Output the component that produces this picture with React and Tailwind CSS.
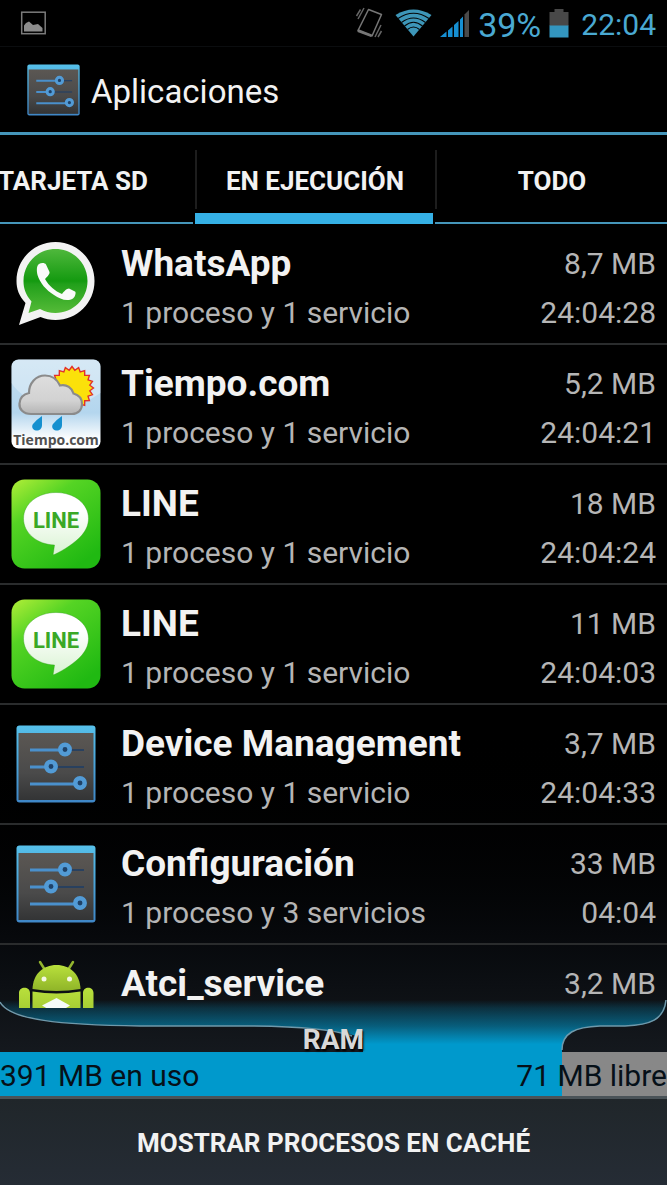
import React from "react";

function SettingsIcon({ className }) {
  return (
    <svg viewBox="0 0 80 78" className={className} aria-hidden="true">
      <defs>
        <linearGradient id="panel" x1="0" y1="0" x2="0" y2="1">
          <stop offset="0" stopColor="#5b5753" />
          <stop offset="0.6" stopColor="#4a4a4a" />
          <stop offset="1" stopColor="#333435" />
        </linearGradient>
        <linearGradient id="edge" x1="0" y1="0" x2="0" y2="1">
          <stop offset="0" stopColor="#56c0ea" />
          <stop offset="1" stopColor="#3f86c6" />
        </linearGradient>
      </defs>
      <rect x="0.5" y="0.5" width="79" height="77" rx="3" fill="url(#edge)" />
      <rect x="2.5" y="8" width="75" height="67" fill="url(#panel)" />
      <path d="M52 25H68M38 42H68" stroke="#1d3d66" strokeWidth="1.6" />
      <path d="M14 25H46M14 42H32M14 59H62" stroke="#4a90cc" strokeWidth="3" />
      <g fill="#1f4268" stroke="#529bd6" strokeWidth="4.5">
        <circle cx="49" cy="24.5" r="4.7" />
        <circle cx="35" cy="41.5" r="4.7" />
        <circle cx="64" cy="58" r="4.7" />
      </g>
    </svg>
  );
}

function WhatsAppIcon() {
  return (
    <svg viewBox="0 0 90 90" className="size-[90px]" aria-hidden="true">
      <defs>
        <linearGradient id="wa" x1="0" y1="0" x2="0" y2="1">
          <stop offset="0" stopColor="#4fb83c" />
          <stop offset="0.5" stopColor="#149a10" />
          <stop offset="0.55" stopColor="#22a01b" />
          <stop offset="1" stopColor="#55bb38" />
        </linearGradient>
      </defs>
      <path d="M44.500 3C66 3 83.500 20 83.500 42S66 81 44.500 81C39 81 34 80 29.500 78L8 86L14.500 64C8 57 5.500 50 5.500 42C5.500 20 23 3 44.500 3Z" fill="#f3f3f3" />
      <path d="M44.500 10C62 10 76.500 24 76.500 42S62 74 44.500 74C38.500 74 34 72.500 29 70L17.500 74L20.500 62.500C15 56 12.500 50 12.500 42C12.500 24 27 10 44.500 10Z" fill="url(#wa)" />
      <path d="M28 25C30 23.500 34 23.500 35 25.500L38.500 33C39 35 36 38 34 40C38 47 44 52 51 55C53 52.500 55.500 49.500 58 49.500L64 52.500C65.500 53.500 64 58 62 59.500C56 63 49 60 43 56C35 51 29 44 26.500 36C25.500 31 25.500 27 28 25Z" fill="#fafafa" />
    </svg>
  );
}

function TiempoIcon() {
  const spikes = Array.from({ length: 40 }, (_, i) => {
    const a = (i * Math.PI) / 20;
    const r = i % 2 ? 18 : 21.5;
    return `${61 + r * Math.cos(a)},${29 + r * Math.sin(a)}`;
  }).join(" ");
  return (
    <svg viewBox="0 0 90 90" className="size-[90px]" aria-hidden="true">
      <defs>
        <linearGradient id="sky" x1="0" y1="0" x2="0" y2="1">
          <stop offset="0" stopColor="#c4dff1" />
          <stop offset="0.6" stopColor="#b4d6ee" />
          <stop offset="0.9" stopColor="#ffffff" />
        </linearGradient>
        <linearGradient id="cloud" x1="0" y1="0" x2="0" y2="1">
          <stop offset="0" stopColor="#dedede" />
          <stop offset="0.65" stopColor="#d2d2d2" />
          <stop offset="1" stopColor="#b4b4b4" />
        </linearGradient>
      </defs>
      <rect x="0.5" y="0.5" width="89" height="89" rx="7" fill="url(#sky)" />
      <path d="M0.5 24Q12 42 40 46T89.500 34V8Q89 1 82 0.500H8Q1 1 0.500 8Z" fill="#fff" opacity="0.3" />
      <polygon points={spikes} fill="#fbe10a" stroke="#e2302a" strokeWidth="1.4" />
      <path d="M20 55C12 55 8 50 8.500 44.500C9 38 13 35 18 34C18 24 25 16.500 34 16.500C42 16.500 46 20 49 26.500C56 25 61 29 62.500 34.500C68 36 71 40 71 45C71 51 67 55 61 55Z" fill="url(#cloud)" stroke="#8b8b8b" strokeWidth="2.2" />
      <path d="M31 57V66C31 70 28 72 25 71.500S20 68 22 65Q25 61 31 57ZM51 57V66C51 70 48 72 45 71.500S40 68 42 65Q45 61 51 57Z" fill="#1690cf" />
      <text x="45" y="86" textAnchor="middle" fontFamily="Open Sans, sans-serif" fontWeight="700" fontSize="14" fill="#505050">Tiempo.com</text>
    </svg>
  );
}

function LineIcon() {
  return (
    <svg viewBox="0 0 90 90" className="size-[90px]" aria-hidden="true">
      <defs>
        <linearGradient id="line" x1="0" y1="0" x2="0.7" y2="1">
          <stop offset="0" stopColor="#b2ee38" />
          <stop offset="0.35" stopColor="#55d424" />
          <stop offset="1" stopColor="#20b912" />
        </linearGradient>
        <linearGradient id="bubble" x1="0" y1="0" x2="0" y2="1">
          <stop offset="0.3" stopColor="#ffffff" />
          <stop offset="1" stopColor="#d9f3d2" />
        </linearGradient>
      </defs>
      <rect x="0.5" y="0.5" width="89" height="89" rx="13" fill="url(#line)" />
      <path d="M45 13.500C63 13.500 77.500 24.500 77.500 39.500C77.500 46 75 51 71 56C64 64 53 71 43.500 75.500C42 76 42 75 42.500 73L43.500 66C26 65.500 12.500 54 12.500 39.500C12.500 24.500 27 13.500 45 13.500Z" fill="url(#bubble)" stroke="#2e9e15" strokeOpacity="0.4" />
      <text x="45" y="49" textAnchor="middle" fontFamily="Roboto, sans-serif" fontWeight="700" fontSize="22" fill="#3aa826">LINE</text>
    </svg>
  );
}

function AndroidIcon() {
  return (
    <svg viewBox="0 0 90 90" className="size-[90px]" aria-hidden="true">
      <defs>
        <linearGradient id="droid" x1="0" y1="0" x2="0" y2="1">
          <stop offset="0" stopColor="#b9e03c" />
          <stop offset="1" stopColor="#8fb428" />
        </linearGradient>
      </defs>
      <path d="M29 3L34 11M62 3L57 11" stroke="#93b52e" strokeWidth="2.5" strokeLinecap="round" />
      <path d="M21.500 30C22 15 32 6 45.500 6S69 15 69.500 30Q45.500 34 21.500 30Z" fill="url(#droid)" />
      <circle cx="33" cy="20" r="2.5" fill="#f4f8e4" />
      <circle cx="58.5" cy="20" r="2.5" fill="#f4f8e4" />
      <path d="M21.500 32.500Q45.500 36.500 69.500 32.500V78H21.500ZM8 34C8 27 19 27 19 34V62H8ZM72 34C72 27 82.500 27 82.500 34V62H72Z" fill="url(#droid)" />
      <path d="M45.500 39L59 46.500L45.500 55L31 46.500Z" fill="#f5fbf8" />
    </svg>
  );
}

const Settings = () => <SettingsIcon className="h-[78px] w-20" />;

const APPS = [
  { name: "WhatsApp", detail: "1 proceso y 1 servicio", size: "8,7 MB", time: "24:04:28", Icon: WhatsAppIcon },
  { name: "Tiempo.com", detail: "1 proceso y 1 servicio", size: "5,2 MB", time: "24:04:21", Icon: TiempoIcon },
  { name: "LINE", detail: "1 proceso y 1 servicio", size: "18 MB", time: "24:04:24", Icon: LineIcon },
  { name: "LINE", detail: "1 proceso y 1 servicio", size: "11 MB", time: "24:04:03", Icon: LineIcon },
  { name: "Device Management", detail: "1 proceso y 1 servicio", size: "3,7 MB", time: "24:04:33", Icon: Settings },
  { name: "Configuración", detail: "1 proceso y 3 servicios", size: "33 MB", time: "04:04", Icon: Settings },
  { name: "Atci_service", size: "3,2 MB", Icon: AndroidIcon },
];

function StatusBar() {
  return (
    <div className="flex h-[47px] shrink-0 items-center justify-between border-b border-[#0b0d0f] pr-[11px] pl-5 text-[#4aa9d2]">
      <svg viewBox="0 0 26 24" className="h-6 w-[26px]" aria-hidden="true">
        <rect x="1.7" y="1.2" width="23.5" height="21.5" fill="none" stroke="#7b7b7b" strokeWidth="1.5" />
        <path d="M4 20.500V14.500L6 12L9 10.500L13 14L18 13L22.500 17V20.500Z" fill="#8c8c8c" />
      </svg>
      <div className="flex items-center">
        <svg viewBox="0 0 28 32" className="h-8 w-7" aria-hidden="true">
          <path d="M13.500 2.500L26.500 7.500L17 29L3 23.500Z" fill="none" stroke="#777" strokeWidth="1.5" strokeLinejoin="round" />
          <path d="M3 22L17 27.500L16 30L2.500 25Z" fill="#777" />
          <path d="M9 1L3 12M5.500 2.500L1.500 9M26 18L20 30M26.500 24L23 30" stroke="#666" strokeWidth="1.5" />
        </svg>
        <svg viewBox="0 0 37 28" className="ml-3 h-7 w-[37px]" aria-hidden="true">
          <path d="M0.500 6Q18.500-5 36.500 6L18.500 27.500Z" fill="#3d96b8" />
          <g fill="none" stroke="#050708" strokeWidth="1.1">
            <path d="M3 9.500Q18.500-1 34 9.500M6.500 13.500Q18.500 4.500 30.500 13.500M9.500 17Q18.500 9.500 27.500 17M12.500 20.500Q18.500 15.500 24.500 20.500" />
          </g>
        </svg>
        <svg viewBox="0 0 30 28" className="ml-2 h-7 w-[30px]" aria-hidden="true">
          <path d="M0 28L6.500 22.500V28ZM8 21.500L12.500 17.500V28H8ZM14 16L18.500 12V28H14ZM20 10.500L23 7.500V28H20Z" fill="#168fd2" />
          <path d="M24.500 5.500L29 1V28H24.500Z" fill="#4a4a4a" />
        </svg>
        <span className="ml-2 pt-1 text-[34px] leading-none">39%</span>
        <svg viewBox="0 0 20 30" className="ml-2 h-[30px] w-5" aria-hidden="true">
          <path d="M5.500 1H14.500V4H19.500V18H0.500V4H5.500Z" fill="#484848" />
          <rect x="0.5" y="17.5" width="19" height="12" fill="#3396c0" />
        </svg>
        <span className="ml-3 pt-1 text-[30px] leading-none">22:04</span>
      </div>
    </div>
  );
}

function Tab({ label, active, divided, className }) {
  return (
    <div className={`flex flex-col pt-[15px] ${className}`} role="presentation">
      <button
        type="button"
        role="tab"
        aria-selected={active}
        className={`h-[60px] flex-1 pt-1 text-[26px] font-bold whitespace-nowrap ${divided ? "border-l-2 border-[#1d1d1d]" : ""}`}
      >
        {label}
      </button>
      <div className="mt-1 flex h-[11px] items-end">
        <div className={active ? "h-full w-full bg-[#35b0e5]" : "h-0.5 w-full bg-[#4596ba]"} />
      </div>
    </div>
  );
}

function AppRow({ app }) {
  const { Icon } = app;
  return (
    <li className="h-[120px] shrink-0 border-b-2 border-[#2a2c2d]">
      <button type="button" className="flex h-full w-full items-start px-[11px] pt-3.5 text-left">
        <span className="flex h-[90px] w-[90px] shrink-0 items-center justify-center">
          <Icon />
        </span>
        <span className="ml-5 flex min-w-0 flex-1 flex-col">
          <span className="flex items-center justify-between leading-[50px]">
            <span className="text-[37px] font-bold">{app.name}</span>
            <span className="text-[30px] text-[#b5b5b5]">{app.size}</span>
          </span>
          {app.detail && (
            <span className="flex items-center justify-between text-[30px] leading-[48px] text-[#b5b5b5]">
              <span>{app.detail}</span>
              <span>{app.time}</span>
            </span>
          )}
        </span>
      </button>
    </li>
  );
}

function RamChart() {
  return (
    <svg viewBox="0 0 667 52" preserveAspectRatio="none" className="absolute bottom-0 left-0 -z-10 h-[52px] w-full" aria-hidden="true">
      <defs>
        <linearGradient id="usage" x1="0" y1="0" x2="0" y2="1">
          <stop offset="0" stopColor="#0099cc" stopOpacity="0" />
          <stop offset="0.15" stopColor="#0099cc" stopOpacity="0.22" />
          <stop offset="0.5" stopColor="#0099cc" stopOpacity="0.55" />
          <stop offset="0.85" stopColor="#0099cc" />
        </linearGradient>
      </defs>
      <path d="M0 0H667C665 20 650 25 625 26H600C575 27 562 33 562 52H363V38C340 30 300 26 240 26H140C60 25 10 20 0 0Z" fill="url(#usage)" />
      <path d="M0 2C10 20 60 25 140 26H240C300 26 335 30 352 36" fill="none" stroke="#6f99ab" strokeWidth="1.5" />
      <path d="M666 0C664 20 650 25 625 26H600C575 27 562 33 562 50" fill="none" stroke="#6f99ab" strokeWidth="1.5" />
    </svg>
  );
}

export default function App() {
  return (
    <div className="isolate flex h-screen flex-col overflow-hidden bg-linear-to-b from-black from-60% to-[#262c34] font-[Roboto,sans-serif] text-[#f2f2f2]">
      <StatusBar />
      <header className="flex h-[88px] shrink-0 items-center gap-[11px] border-b-[3px] border-[#4596ba] pl-[27px]">
        <SettingsIcon className="h-[52px] w-[53px]" />
        <h1 className="pt-1 text-[33px] leading-10">Aplicaciones</h1>
      </header>
      <div role="tablist" className="flex h-[89px] shrink-0 gap-0.5 overflow-hidden">
        <Tab label="TARJETA SD" className="-ml-[47px] w-[240px] shrink-0" />
        <Tab label="EN EJECUCIÓN" active divided className="w-[238px] shrink-0" />
        <Tab label="TODO" divided className="min-w-[232px] flex-1" />
      </div>
      <ul className="flex min-h-0 flex-1 flex-col overflow-y-auto pt-px [scrollbar-width:none]">
        {APPS.map((app, i) => (
          <AppRow key={i} app={app} />
        ))}
      </ul>
      <section aria-label="RAM" className="shrink-0">
        <div className="relative h-11">
          <RamChart />
          <h2 className="pt-3 text-center text-[28px] leading-10 font-bold text-[#d8d8d8] [text-shadow:1px_2px_2px_#000]">RAM</h2>
        </div>
        <div className="flex h-11 items-center justify-between bg-linear-to-r from-[#0099cc] from-[84.3%] to-[#888888] to-[84.3%] pt-0.5 text-[30px] whitespace-nowrap text-[#061018]">
          <span>391 MB en uso</span>
          <span>71 MB libre</span>
        </div>
      </section>
      <footer className="flex h-[89px] shrink-0 border-t-[3px] border-[#4a5358] bg-linear-to-b from-[#20262a] to-[#252c35]">
        <button type="button" className="flex-1 pt-0.5 text-[26px] font-bold">
          MOSTRAR PROCESOS EN CACHÉ
        </button>
      </footer>
    </div>
  );
}
